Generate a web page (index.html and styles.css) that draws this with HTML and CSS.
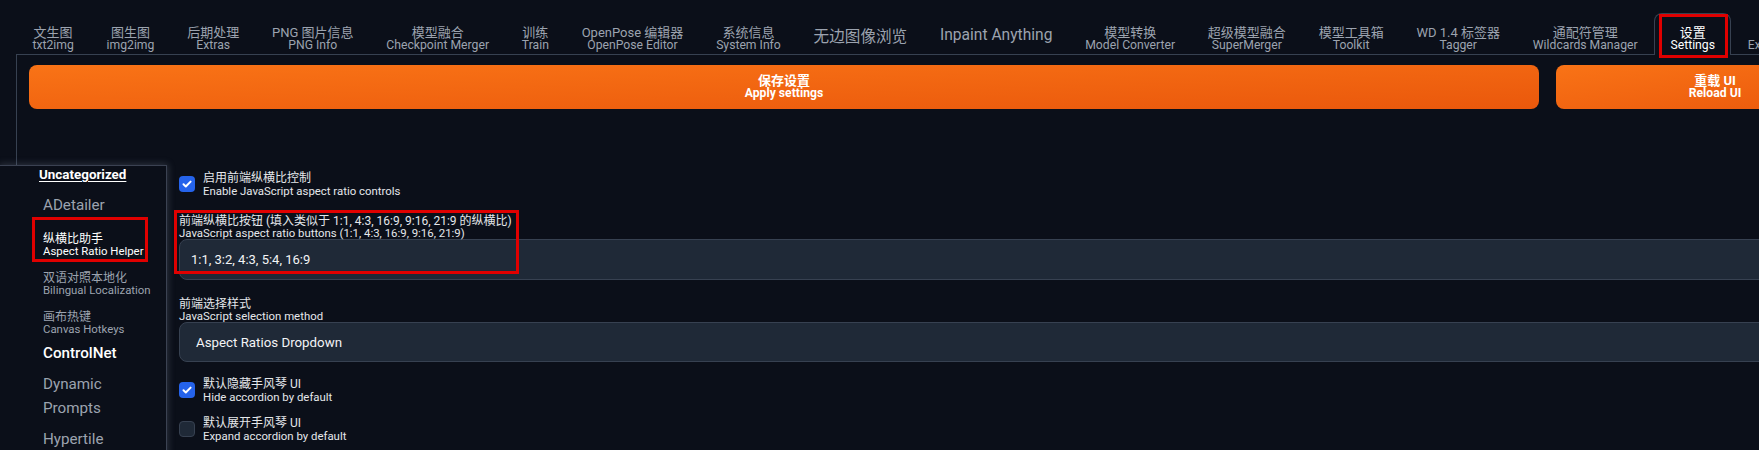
FILE: index.html
```html
<!DOCTYPE html>
<html lang="zh">
<head>
<meta charset="utf-8">
<title>Settings</title>
<link rel="stylesheet" href="styles.css">
</head>
<body>
<div class="app">
  <div class="tab-nav">
    <div class="tab"><span class="bi"><span class="zh">文生图</span><span class="en">txt2img</span></span></div>
    <div class="tab"><span class="bi"><span class="zh">图生图</span><span class="en">img2img</span></span></div>
    <div class="tab"><span class="bi"><span class="zh">后期处理</span><span class="en">Extras</span></span></div>
    <div class="tab"><span class="bi"><span class="zh">PNG 图片信息</span><span class="en">PNG Info</span></span></div>
    <div class="tab"><span class="bi"><span class="zh">模型融合</span><span class="en">Checkpoint Merger</span></span></div>
    <div class="tab"><span class="bi"><span class="zh">训练</span><span class="en">Train</span></span></div>
    <div class="tab"><span class="bi"><span class="zh">OpenPose 编辑器</span><span class="en">OpenPose Editor</span></span></div>
    <div class="tab"><span class="bi"><span class="zh">系统信息</span><span class="en">System Info</span></span></div>
    <div class="tab single">无边图像浏览</div>
    <div class="tab single">Inpaint Anything</div>
    <div class="tab"><span class="bi"><span class="zh">模型转换</span><span class="en">Model Converter</span></span></div>
    <div class="tab"><span class="bi"><span class="zh">超级模型融合</span><span class="en">SuperMerger</span></span></div>
    <div class="tab"><span class="bi"><span class="zh">模型工具箱</span><span class="en">Toolkit</span></span></div>
    <div class="tab"><span class="bi"><span class="zh">WD 1.4 标签器</span><span class="en">Tagger</span></span></div>
    <div class="tab"><span class="bi"><span class="zh">通配符管理</span><span class="en">Wildcards Manager</span></span></div>
    <div class="tab selected"><span class="bi"><span class="zh">设置</span><span class="en">Settings</span></span><span class="mark mark-tab"></span></div>
    <div class="tab"><span class="bi"><span class="zh">扩展</span><span class="en">Extensions</span></span></div>
  </div>

  <div class="panel">
    <div class="actions">
      <div class="btn apply"><span class="bi"><span>保存设置</span><span>Apply settings</span></span></div>
      <div class="btn reload"><span class="bi"><span>重载 UI</span><span>Reload UI</span></span></div>
    </div>

    <div class="settings">
      <div class="sidebar">
        <div class="cat-title">Uncategorized</div>
        <div class="cat">ADetailer</div>
        <div class="cat bi-cat active"><span class="zh">纵横比助手</span><span class="en">Aspect Ratio Helper</span><span class="mark mark-cat"></span></div>
        <div class="cat bi-cat"><span class="zh">双语对照本地化</span><span class="en">Bilingual Localization</span></div>
        <div class="cat bi-cat"><span class="zh">画布热键</span><span class="en">Canvas Hotkeys</span></div>
        <div class="cat strong">ControlNet</div>
        <div class="cat">Dynamic Prompts</div>
        <div class="cat">Hypertile</div>
      </div>

      <div class="content">
        <div class="check-row gap-a">
          <span class="cb"><svg width="12" height="12" viewBox="0 0 12 12"><path d="M2.5 6.3l2.3 2.2L9.6 3.6" fill="none" stroke="#fff" stroke-width="2" stroke-linecap="round" stroke-linejoin="round"/></svg></span>
          <span class="check-label"><span class="zh">启用前端纵横比控制</span><span class="en">Enable JavaScript aspect ratio controls</span></span>
        </div>

        <div class="field gap-a">
          <div class="field-label"><span class="zh">前端纵横比按钮 (填入类似于 1:1, 4:3, 16:9, 9:16, 21:9 的纵横比)</span><span class="en">JavaScript aspect ratio buttons (1:1, 4:3, 16:9, 9:16, 21:9)</span></div>
          <div class="input">1:1, 3:2, 4:3, 5:4, 16:9</div>
          <span class="mark mark-field"></span>
        </div>

        <div class="field gap-b">
          <div class="field-label"><span class="zh">前端选择样式</span><span class="en">JavaScript selection method</span></div>
          <div class="input select">Aspect Ratios Dropdown</div>
        </div>

        <div class="check-row gap-c">
          <span class="cb"><svg width="12" height="12" viewBox="0 0 12 12"><path d="M2.5 6.3l2.3 2.2L9.6 3.6" fill="none" stroke="#fff" stroke-width="2" stroke-linecap="round" stroke-linejoin="round"/></svg></span>
          <span class="check-label"><span class="zh">默认隐藏手风琴 UI</span><span class="en">Hide accordion by default</span></span>
        </div>

        <div class="check-row">
          <span class="cb off"></span>
          <span class="check-label"><span class="zh">默认展开手风琴 UI</span><span class="en">Expand accordion by default</span></span>
        </div>
      </div>
    </div>
  </div>
</div>
</body>
</html>
```

FILE: styles.css
```css
* { box-sizing: border-box; }

html, body {
  margin: 0;
  background: #0b0f19;
  overflow: hidden;
}

body {
  font-family: Roboto, "Noto Sans CJK SC", sans-serif;
  color: #e5e7eb;
}

.app {
  width: 1886px;
  padding-top: 13px;
}

/* ---------- tabs ---------- */
.tab-nav {
  display: flex;
  flex-wrap: nowrap;
  margin-left: 16px;
  height: 42px;
  border-bottom: 1px solid #374151;
}

.tab {
  flex: none;
  position: relative;
  height: 41px;
  padding: 9px 15.4px 0;
  border: 1px solid transparent;
  border-bottom: none;
  display: flex;
  align-items: center;
  justify-content: center;
  color: #9ca3af;
  white-space: nowrap;
}

.tab.single {
  padding-top: 1px;
  font-size: 15.6px;
}

.tab.selected {
  height: 42px;
  margin-bottom: -1px;
  border-color: #374151;
  border-radius: 8px 8px 0 0;
  background: #0b0f19;
  color: #ffffff;
}

.bi {
  display: flex;
  flex-direction: column;
  align-items: center;
  line-height: 13px;
  white-space: nowrap;
}

.tab .zh { font-size: 13px; }
.tab .en { font-size: 12.2px; }

.mark {
  position: absolute;
  border: 3px solid #e00000;
  pointer-events: none;
}

.mark-tab {
  left: 4px;
  top: 0;
  width: 69px;
  height: 44px;
}

/* ---------- panel ---------- */
.panel {
  margin-left: 16px;
  border-left: 1px solid #374151;
  padding: 10px 12px 0;
}

.actions {
  display: flex;
  gap: 17px;
}

.btn {
  height: 44px;
  border-radius: 8px;
  background: linear-gradient(to bottom right, #f97316, #ea580c);
  color: #ffffff;
  font-weight: 700;
  font-size: 12.2px;
  display: flex;
  align-items: center;
  justify-content: center;
}

.btn .bi span:first-child { font-size: 13px; }

.btn.apply { flex: 1; }
.btn.reload { flex: none; width: 318px; }

/* ---------- settings ---------- */
.settings {
  display: flex;
  margin-top: 56px;
  align-items: flex-start;
}

.sidebar {
  flex: none;
  position: relative;
  z-index: 1;
  width: 167px;
  margin-left: -29px;
  min-height: 320px;
  padding: 0 12px 40px 39px;
  background: #0b0f19;
  border-top: 1px solid #3b4252;
  border-right: 1px solid #3b4252;
  box-shadow: 0 0 7px 1px rgba(140, 150, 170, 0.28);
}

.cat-title {
  font-size: 13.4px;
  font-weight: 700;
  line-height: 17px;
  color: #ffffff;
  text-decoration: underline;
  text-underline-offset: 2px;
  margin-bottom: 10px;
}

.cat {
  position: relative;
  padding-left: 4px;
  margin-bottom: 7px;
  font-size: 15.2px;
  line-height: 24px;
  color: #9ca3af;
}

.cat.strong {
  color: #ffffff;
  font-weight: 500;
}

.cat.bi-cat {
  display: flex;
  flex-direction: column;
  align-items: flex-start;
  padding-top: 9px;
  margin-bottom: 6px;
  line-height: 12px;
  white-space: nowrap;
}

.cat.bi-cat .zh { font-size: 12px; }
.cat.bi-cat .en { font-size: 11.4px; }

.cat.active { color: #ffffff; }

.mark-cat {
  left: -7px;
  top: -7px;
  width: 116px;
  height: 45px;
}

.content {
  flex: 1;
  display: flex;
  flex-direction: column;
  padding: 7px 0 0 12px;
}

.check-row {
  display: flex;
  align-items: flex-start;
  gap: 8px;
}

.check-row.gap-a { margin-bottom: 17px; }
.field.gap-a { margin-bottom: 18px; }
.gap-b { margin-bottom: 16px; }
.gap-c { margin-bottom: 13px; }

.cb {
  flex: none;
  width: 16px;
  height: 16px;
  margin-top: 4px;
  border-radius: 4px;
  background: #2563eb;
  display: flex;
  align-items: center;
  justify-content: center;
}

.cb.off {
  background: #1f2937;
  border: 1px solid #374151;
}

.check-label {
  display: flex;
  flex-direction: column;
  line-height: 13px;
  color: #e5e7eb;
  white-space: nowrap;
}

.check-label .zh,
.field-label .zh { font-size: 12px; }

.check-label .en,
.field-label .en { font-size: 11.4px; }

.field {
  position: relative;
}

.field-label {
  display: flex;
  flex-direction: column;
  line-height: 12px;
  color: #e5e7eb;
  white-space: nowrap;
}

.input {
  height: 41px;
  background: #1f2937;
  border: 1px solid #374151;
  border-radius: 8px;
  padding-left: 11px;
  display: flex;
  align-items: center;
  font-size: 13px;
  color: #f3f4f6;
}

.input.select {
  height: 40px;
  padding-left: 16px;
  font-size: 13.3px;
}

.mark-field {
  left: -5px;
  top: -5px;
  width: 345px;
  height: 64px;
}
```
